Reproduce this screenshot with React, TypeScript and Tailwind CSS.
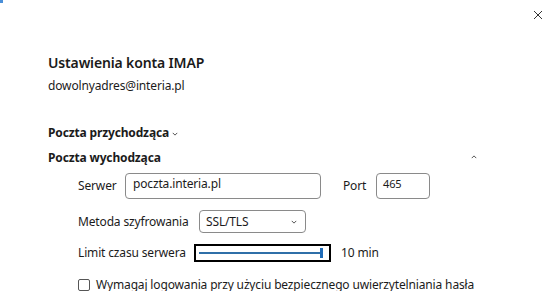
import React from "react";

const font = { fontFamily: '"Noto Sans", "Open Sans", sans-serif' };

function ChevronDown({ className }: { className?: string }) {
  return (
    <svg viewBox="0 0 8 5" className={className} fill="none" stroke="currentColor" strokeWidth="1">
      <path d="M1 1l3 3 3-3" />
    </svg>
  );
}

function ChevronUp({ className }: { className?: string }) {
  return (
    <svg viewBox="0 0 8 5" className={className} fill="none" stroke="currentColor" strokeWidth="1">
      <path d="M1 4l3-3 3 3" />
    </svg>
  );
}

export default function App() {
  return (
    <div
      className="relative h-[291px] w-[552px] overflow-hidden bg-white text-[#1b1b1b]"
      style={font}
    >
      <div className="absolute left-0 top-0 h-[3px] w-[3px] bg-[#4a8fd8]" />

      <div className="flex justify-end pr-[9px] pt-[9px]">
        <button type="button" aria-label="Zamknij" className="flex h-[11px] w-[11px] items-center justify-center">
          <svg viewBox="0 0 10 10" className="h-[10px] w-[10px]" stroke="#333" strokeWidth="1">
            <path d="M1 1l8 8M9 1l-8 8" />
          </svg>
        </button>
      </div>

      <div className="pl-[48px] pr-[70px] tracking-[-0.15px]">
        <h1 className="mt-[33px] whitespace-nowrap text-[14px] font-semibold leading-[20px]">Ustawienia konta IMAP</h1>
        <p className="mt-[4px] text-[12px] leading-[18px]">dowolnyadres@interia.pl</p>

        <div className="mt-[29px] flex items-center gap-[3px] text-[12px] font-bold leading-[18px]">
          <span>Poczta przychodząca</span>
          <ChevronDown className="mt-[2px] h-[4px] w-[6px]" />
        </div>

        <div className="mt-[7px] flex items-center justify-between text-[12px] font-bold leading-[18px]">
          <span>Poczta wychodząca</span>
          <ChevronUp className="mb-[3px] mr-[5px] h-[4px] w-[6px]" />
        </div>

        <div className="whitespace-nowrap pl-[30px] text-[12px]">
          <div className="mt-[6px] flex items-center">
            <span className="w-[47px] shrink-0">Serwer</span>
            <div className="h-[26px] w-[196px] shrink-0 rounded-[4px] border border-[#8a8a8a] px-[7px] pt-[1px] leading-[18px]">
              poczta.interia.pl
            </div>
            <span className="ml-[22px] w-[33px] shrink-0">Port</span>
            <div className="h-[26px] w-[54px] shrink-0 rounded-[4px] border border-[#8a8a8a] px-[6px] pt-[1px] text-[11px] leading-[18px]">
              465
            </div>
          </div>

          <div className="mt-[11px] flex items-center">
            <span className="w-[121px] shrink-0">Metoda szyfrowania</span>
            <div className="flex h-[23px] w-[107px] shrink-0 items-center justify-between rounded-[4px] border border-[#8a8a8a] pl-[6px] pr-[8px]">
              <span>SSL/TLS</span>
              <ChevronDown className="h-[4px] w-[6px]" />
            </div>
          </div>

          <div className="mt-[11px] flex items-center">
            <span className="w-[116px] shrink-0">Limit czasu serwera</span>
            <div className="flex h-[18px] w-[137px] shrink-0 items-center border-2 border-black px-[3px]">
              <div className="h-[2px] flex-1 bg-[#2f6fa8]" />
              <div className="h-[10px] w-[3px] bg-[#1f6cb8]" />
              <div className="w-[3px]" />
            </div>
            <span className="ml-[10px]">10 min</span>
          </div>

          <label className="mt-[16px] flex items-center gap-[6px] leading-[14px]">
            <span className="h-[12px] w-[12px] shrink-0 rounded-[2px] border border-[#555]" />
            <span>Wymagaj logowania przy użyciu bezpiecznego uwierzytelniania hasła</span>
          </label>
        </div>
      </div>
    </div>
  );
}
